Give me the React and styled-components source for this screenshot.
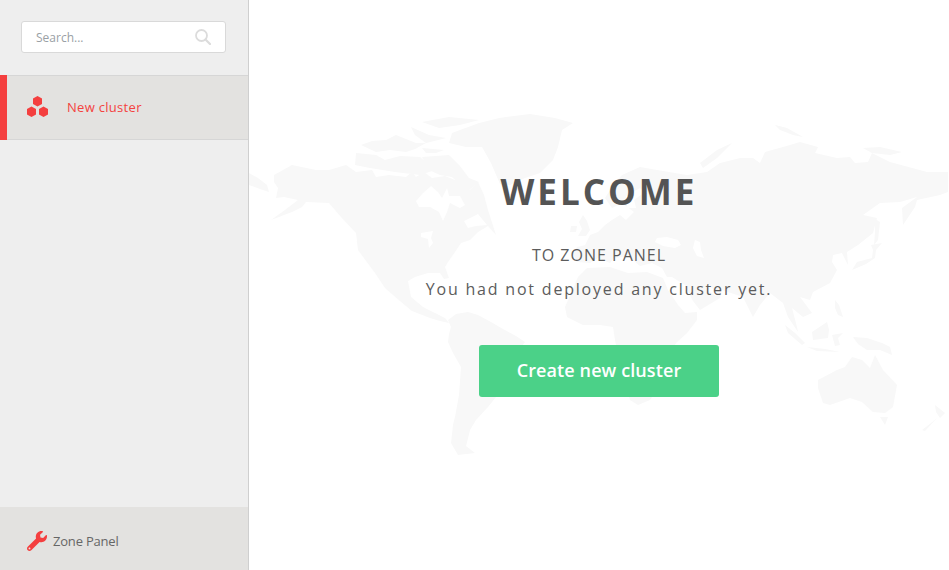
import React from "react";
import styled, { createGlobalStyle } from "styled-components";
import { FaWrench } from "react-icons/fa";

const Global = createGlobalStyle`
  html, body { margin: 0; padding: 0; height: 100%; overflow: hidden; }
  #root { height: 100%; }
  * { box-sizing: border-box; }
  body { font-family: "Open Sans", "Liberation Sans", sans-serif; background: #fff; }
`;

const Page = styled.div`
  display: flex;
  width: 949px;
  height: 570px;
`;
const Sidebar = styled.aside`
  width: 249px;
  flex: none;
  display: flex;
  flex-direction: column;
  background: #eeeeee;
  border-right: 1px solid #cfcfcf;
`;
const SearchWrap = styled.div`
  padding: 21px 22px 22px 21px;
`;
const SearchBox = styled.div`
  height: 32px;
  display: flex;
  align-items: center;
  justify-content: space-between;
  padding: 0 14px;
  background: #fff;
  border: 1px solid #d9d9d9;
  border-radius: 3px;
`;
const SearchText = styled.span`
  font-size: 12px;
  color: #9a9fa5;
`;
const Item = styled.div`
  height: 65px;
  display: flex;
  align-items: center;
  gap: 19px;
  padding: 0 0 2px 27px;
  background: #e3e2e0;
  border-top: 1px solid #d6d6d6;
  border-bottom: 1px solid #d6d6d6;
  position: relative;
  &::before {
    content: "";
    position: absolute;
    left: 0;
    top: -1px;
    bottom: -1px;
    width: 7px;
    background: #f43f3f;
  }
`;
const ItemLabel = styled.span`
  font-size: 13px;
  letter-spacing: 0.3px;
  color: #f4433f;
`;
const Spacer = styled.div`
  flex: 1;
`;
const Footer = styled.div`
  height: 63px;
  display: flex;
  align-items: center;
  gap: 6px;
  padding: 4px 0 0 27px;
  background: #e3e2e0;
  color: #f43f3f;
`;
const FooterLabel = styled.span`
  font-size: 13px;
  letter-spacing: -0.2px;
  color: #666;
`;
const Main = styled.main`
  flex: 1;
  position: relative;
  overflow: hidden;
  display: flex;
  flex-direction: column;
  align-items: center;
  padding-top: 167px;
  color: #555;
`;
const MapArt = styled.svg`
  position: absolute;
  left: 0;
  top: 0;
`;
const Title = styled.h1`
  position: relative;
  margin: 0;
  font-size: 35px;
  line-height: 49px;
  font-weight: 700;
  letter-spacing: 3px;
  color: #545454;
`;
const Subtitle = styled.div`
  position: relative;
  margin-top: 27px;
  font-size: 16px;
  line-height: 24px;
  letter-spacing: 1px;
  color: #5c5c5c;
`;
const Message = styled.div`
  position: relative;
  margin-top: 10px;
  font-size: 16px;
  line-height: 24px;
  letter-spacing: 1.8px;
  color: #5c5c5c;
`;
const CreateButton = styled.button`
  position: relative;
  margin-top: 44px;
  width: 240px;
  height: 52px;
  padding: 0 0 3px;
  border: 0;
  border-radius: 3px;
  background: #4bd188;
  color: #fff;
  font-family: inherit;
  font-size: 18px;
  font-weight: 600;
  letter-spacing: 0.1px;
`;

const Hexes = () => (
  <svg width="21" height="21" viewBox="0 0 21 21">
    <g fill="#f43f3f">
      <path d="M10.500 0l4.500 2.600v5.300l-4.500 2.600-4.500-2.600V2.600z" />
      <path d="M4.500 10.500l4.500 2.600v5.300l-4.500 2.600L0 18.400v-5.300z" />
      <path d="M16.500 10.500l4.500 2.600v5.300l-4.500 2.600-4.500-2.600v-5.300z" />
    </g>
  </svg>
);

const Land = ({ d }) => <path d={d} fill="#f8f8f8" />;
const Water = ({ d }) => <path d={d} fill="#ffffff" />;

const WorldMap = () => (
  <MapArt width="700" height="570" viewBox="249 0 700 570">
    {/* Chukotka */}
    <Land d="M249 173L258 178 267 185 269 192 260 189 249 185Z" />
    {/* North America */}
    <Land d="M274 175L292 165 316 170 329 170 346 165 356 172 372 170 376 177 389 175 406 177 412 172 416 177 424 172 432 178 445 176 460 182 470 190 478 182 484 195 488 210 496 235 488 226 478 232 470 240 461 243 455 252 448 262 445 267 449 278 444 279 440 273 428 273 415 277 408 281 411 297 423 307 435 313 445 318 449 323 440 321 430 318 412 311 400 301 385 288 375 273 358 250 356 233 341 217 329 203 306 202 302 207 292 212 271 220 285 210 298 200 284 197 276 198 278 188 274 182Z" />
    <Water d="M416 201L423 193 431 186 438 192 442 198 447 188 449 196 460 196 465 205 460 208 450 203 447 212 443 221 439 212 430 207 419 207Z" />
    <Water d="M421 233L433 231 431 238 433 243 429 248 428 239 421 237Z" />
    <Water d="M464 221L478 214 487 225 476 226 468 228Z" />
    {/* Arctic islands */}
    <Land d="M361 145L372 141 386 140 396 135 406 139 416 143 426 143 415 149 406 152 390 150 376 152Z" />
    <Land d="M356 153L376 155 385 160 400 156 420 157 435 170 420 175 395 172 370 168 355 165Z" />
    <Land d="M422 157L449 155 460 166 469 178 479 182 469 190 460 184 452 177 440 175 429 170Z" />
    <Land d="M411 127L429 135 446 138 426 143 415 135Z" />
    <Land d="M422 122L449 117 479 120 460 125 439 128Z" />
    <Land d="M422 148L444 150 436 153 426 153Z" />
    {/* Greenland */}
    <Land d="M452 133L479 123 499 118 530 114 555 118 573 123 562 130 558 147 553 160 540 173 525 178 510 185 500 184 491 163 482 147 466 147 449 143Z" />
    {/* British Isles */}
    <Land d="M583 215L587 221 590 230 586 236 578 236 582 229 579 222ZM571 226L577 226 576 232 570 232Z" />
    {/* Eurasia */}
    <Land d="M622 175L640 167 657 170 687 175 707 172 720 163 740 158 753 158 760 163 765 152 790 145 800 142 818 147 815 153 837 158 850 157 855 163 868 162 872 153 890 162 927 172 948 172 948 192 940 195 917 200 915 207 903 225 902 208 917 197 900 202 880 203 863 215 877 218 873 233 858 245 847 252 848 265 842 253 833 255 832 262 837 270 830 283 813 292 810 300 800 297 812 313 803 317 792 308 797 327 798 332 788 317 783 303 770 293 760 305 753 317 743 297 722 290 720 298 700 310 693 301 685 285 672 277 667 277 662 268 652 263 640 266 628 256 614 258 610 263 598 258 590 263 577 262 573 254 577 247 585 245 590 235 598 232 605 225 612 220 620 215 626 220 634 212 622 203 612 208 605 198 612 187Z" />
    <Water d="M657 238L667 237 678 240 681 245 675 248 663 246 655 242Z" />
    <Water d="M695 240L700 242 701 250 704 258 697 256 693 248Z" />
    <Water d="M626 196L640 188 645 192 634 200 636 208 627 208Z" />
    <Water d="M710 287L720 293 716 296 708 291Z" />
    {/* Arctic Russia */}
    <Land d="M700 163L717 150 732 143 717 158 703 168Z" />
    <Land d="M775 125L787 128 803 137 793 135 780 130Z" />
    <Land d="M863 148L880 147 902 152 890 155 872 153Z" />
    {/* Sakhalin and Japan */}
    <Land d="M875 219L880 222 878 240 874 245 875 232Z" />
    <Land d="M852 270L857 262 872 258 873 250 871 245 882 243 876 250 875 258 866 264Z" />
    {/* Africa */}
    <Land d="M565 307L578 277 587 268 610 267 628 273 647 272 663 278 668 290 678 305 685 313 697 312 697 320 687 333 677 342 673 347 666 362 660 385 650 400 638 405 630 400 622 375 615 340 613 327 600 325 583 325 567 317Z" />
    <Land d="M660 335L665 337 663 341 659 340Z" />
    {/* South America */}
    <Land d="M448 320L456 314 468 312 478 315 491 322 503 329 516 336 525 342 519 350 511 360 508 375 500 392 488 407 476 420 470 430 466 446 475 453 458 455 451 443 453 425 455 417 459 395 461 367 453 353 448 342 449 334 451 327Z" />
    {/* SE Asia islands */}
    <Land d="M785 325L795 333 805 343 802 345 788 333Z" />
    <Land d="M807 347L825 349 840 352 817 351Z" />
    <Land d="M812 332L827 322 829 330 828 338 813 340Z" />
    <Land d="M832 335L843 333 838 338 840 345 835 346Z" />
    <Land d="M835 300L839 305 843 317 838 315 835 308Z" />
    <Land d="M853 337L867 338 882 343 890 347 892 355 880 350 867 350 858 344Z" />
    {/* Australia */}
    <Land d="M818 380L837 370 845 367 852 357 862 360 870 368 875 355 883 370 897 385 893 407 885 413 873 412 862 402 850 398 830 405 823 403 818 388Z" />
    <Land d="M880 417L888 417 885 425Z" />
    {/* New Zealand */}
    <Land d="M935 405L945 413 940 418 936 412ZM937 418L925 431 922 430 931 423Z" />
  </MapArt>
);

export default function App() {
  return (
    <Page>
      <Global />
      <Sidebar>
        <SearchWrap>
          <SearchBox>
            <SearchText>Search...</SearchText>
            <svg width="16" height="16" viewBox="0 0 16 16" fill="none" stroke="#dcdcdc">
              <circle cx="6.500" cy="6.500" r="5.500" strokeWidth="1.800" />
              <path d="M10.500 10.500L15 15" strokeWidth="2.200" strokeLinecap="round" />
            </svg>
          </SearchBox>
        </SearchWrap>
        <Item>
          <Hexes />
          <ItemLabel>New cluster</ItemLabel>
        </Item>
        <Spacer />
        <Footer>
          <FaWrench size={20} />
          <FooterLabel>Zone Panel</FooterLabel>
        </Footer>
      </Sidebar>
      <Main>
        <WorldMap />
        <Title>WELCOME</Title>
        <Subtitle>TO ZONE PANEL</Subtitle>
        <Message>You had not deployed any cluster yet.</Message>
        <CreateButton>Create new cluster</CreateButton>
      </Main>
    </Page>
  );
}
